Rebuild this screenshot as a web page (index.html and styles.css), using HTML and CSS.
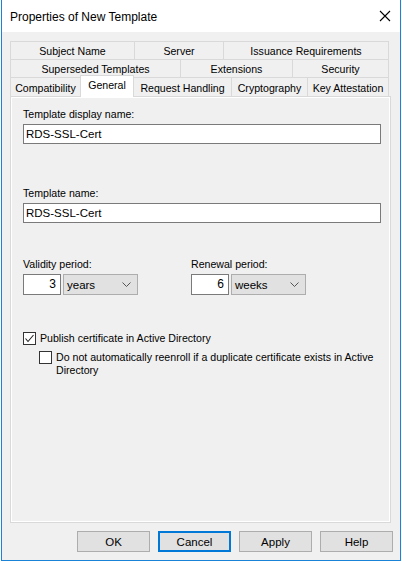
FILE: index.html
```html
<!DOCTYPE html>
<html>
<head>
<meta charset="utf-8">
<link rel="stylesheet" href="styles.css">
</head>
<body>
<div class="window">
  <div class="titlebar">
    <span class="title">Properties of New Template</span>
    <svg class="close" width="12" height="12" viewBox="0 0 12 12"><path d="M1 1 L11 11 M11 1 L1 11" stroke="#000" stroke-width="1.1" fill="none"/></svg>
  </div>
  <div class="body">
    <div class="tabs">
      <div class="tabrow">
        <div class="tab" style="width:124px">Subject Name</div>
        <div class="tab" style="width:89px">Server</div>
        <div class="tab last" style="width:166px">Issuance Requirements</div>
      </div>
      <div class="tabrow">
        <div class="tab" style="width:170px">Superseded Templates</div>
        <div class="tab" style="width:112px">Extensions</div>
        <div class="tab last" style="width:97px">Security</div>
      </div>
      <div class="tabrow front">
        <div class="tab" style="width:70px">Compatibility</div>
        <div class="tab selected" style="width:54px">General</div>
        <div class="tab" style="width:98px">Request Handling</div>
        <div class="tab" style="width:76px">Cryptography</div>
        <div class="tab last" style="width:82px">Key Attestation</div>
      </div>
    </div>
    <div class="panel">
      <div class="label">Template display name:</div>
      <div class="textbox">RDS-SSL-Cert</div>
      <div class="label second">Template name:</div>
      <div class="textbox">RDS-SSL-Cert</div>
      <div class="periods">
        <div class="period">
          <div class="label">Validity period:</div>
          <div class="period-row">
            <div class="numbox">3</div>
            <div class="combo"><span>years</span><svg width="9" height="6" viewBox="0 0 9 6"><path d="M0.5 0.5 L4.5 4.5 L8.5 0.5" stroke="#555" fill="none"/></svg></div>
          </div>
        </div>
        <div class="period">
          <div class="label">Renewal period:</div>
          <div class="period-row">
            <div class="numbox">6</div>
            <div class="combo"><span>weeks</span><svg width="9" height="6" viewBox="0 0 9 6"><path d="M0.5 0.5 L4.5 4.5 L8.5 0.5" stroke="#555" fill="none"/></svg></div>
          </div>
        </div>
      </div>
      <div class="check first">
        <span class="box"><svg width="11" height="11" viewBox="0 0 11 11"><path d="M1.5 5.5 L4 8.5 L9.5 2" stroke="#222" stroke-width="1.1" fill="none"/></svg></span>
        <span class="ctext">Publish certificate in Active Directory</span>
      </div>
      <div class="check sub">
        <span class="box"></span>
        <span class="ctext">Do not automatically reenroll if a duplicate certificate exists in Active<br>Directory</span>
      </div>
    </div>
    <div class="buttons">
      <div class="btn">OK</div>
      <div class="btn default">Cancel</div>
      <div class="btn">Apply</div>
      <div class="btn">Help</div>
    </div>
  </div>
</div>
</body>
</html>
```
FILE: styles.css
```css
html, body {
  margin: 0;
  padding: 0;
  background: #ffffff;
}
body {
  font-family: "Liberation Sans", Arial, sans-serif;
  font-size: 10.6px;
  color: #000;
}
.window {
  margin-left: 1px;
  width: 398px;
  height: 560px;
  border-left: 1px solid #1883d7;
  border-right: 1px solid #1883d7;
  border-bottom: 1px solid #1883d7;
  display: flex;
  flex-direction: column;
  background: #f0f0f0;
}
.titlebar {
  height: 32px;
  background: #ffffff;
  display: flex;
  align-items: center;
  justify-content: space-between;
  padding: 0 9px 0 8px;
}
.title {
  font-size: 12px;
  padding-top: 1px;
}
.body {
  flex: 1;
  display: flex;
  flex-direction: column;
  padding: 9px 0 0 8px;
}
.tabs {
  display: flex;
  flex-direction: column;
}
.tabrow {
  display: flex;
  height: 18px;
}
.tabrow.front {
  height: 19px;
}
.tab {
  box-sizing: border-box;
  height: 100%;
  border-top: 1px solid #d9d9d9;
  border-left: 1px solid #d9d9d9;
  display: flex;
  align-items: center;
  justify-content: center;
  padding-top: 1px;
  background: #f0f0f0;
  white-space: nowrap;
}
.tab.last {
  border-right: 1px solid #d9d9d9;
}
.tab.selected {
  background: #ffffff;
  height: 22px;
  margin-top: -2px;
  border-right: 1px solid #d9d9d9;
  margin-right: -1px;
  position: relative;
  z-index: 2;
  align-items: flex-start;
  padding-top: 3px;
}
.panel {
  box-sizing: border-box;
  width: 381px;
  height: 427px;
  border: 1px solid #d9d9d9;
  box-shadow: inset 1px 1px 0 #ffffff, inset -1px -1px 0 #ffffff;
  padding: 11px 10px 0 12px;
  display: flex;
  flex-direction: column;
}
.label {
  line-height: 13px;
  height: 13px;
  margin-bottom: 3px;
}
.label.second {
  margin-top: 43px;
  margin-bottom: 3px;
}
.textbox {
  box-sizing: border-box;
  width: 358px;
  height: 20px;
  border: 1px solid #7a7a7a;
  background: #ffffff;
  padding-left: 2px;
  line-height: 18px;
  font-size: 11.5px;
}
.periods {
  display: flex;
  margin-top: 35px;
}
.period {
  width: 168px;
  display: flex;
  flex-direction: column;
}
.period-row {
  display: flex;
  gap: 2px;
}
.numbox {
  box-sizing: border-box;
  width: 38px;
  height: 21px;
  border: 1px solid #7a7a7a;
  background: #fff;
  text-align: right;
  padding-right: 4px;
  line-height: 19px;
  font-size: 12px;
}
.combo {
  box-sizing: border-box;
  width: 75px;
  height: 21px;
  border: 1px solid #adadad;
  background: #e1e1e1;
  display: flex;
  align-items: center;
  justify-content: space-between;
  padding: 0 6px 0 3px;
  font-size: 11.5px;
}
.check {
  display: flex;
  align-items: flex-start;
  gap: 4px;
  line-height: 13px;
}
.check.first {
  margin-top: 37px;
}
.check.sub {
  margin-top: 6px;
  margin-left: 16px;
}
.box {
  box-sizing: border-box;
  width: 13px;
  height: 13px;
  flex: none;
  border: 1px solid #333;
  background: #fff;
  display: flex;
  align-items: center;
  justify-content: center;
}
.ctext {
  white-space: nowrap;
}
.buttons {
  display: flex;
  justify-content: flex-end;
  gap: 8px;
  padding-right: 7px;
  margin-top: 8px;
}
.btn {
  box-sizing: border-box;
  width: 73px;
  height: 21px;
  border: 1px solid #adadad;
  background: #e1e1e1;
  display: flex;
  align-items: center;
  justify-content: center;
  font-size: 11.5px;
}
.btn.default {
  border: 2px solid #0078d7;
}
```
